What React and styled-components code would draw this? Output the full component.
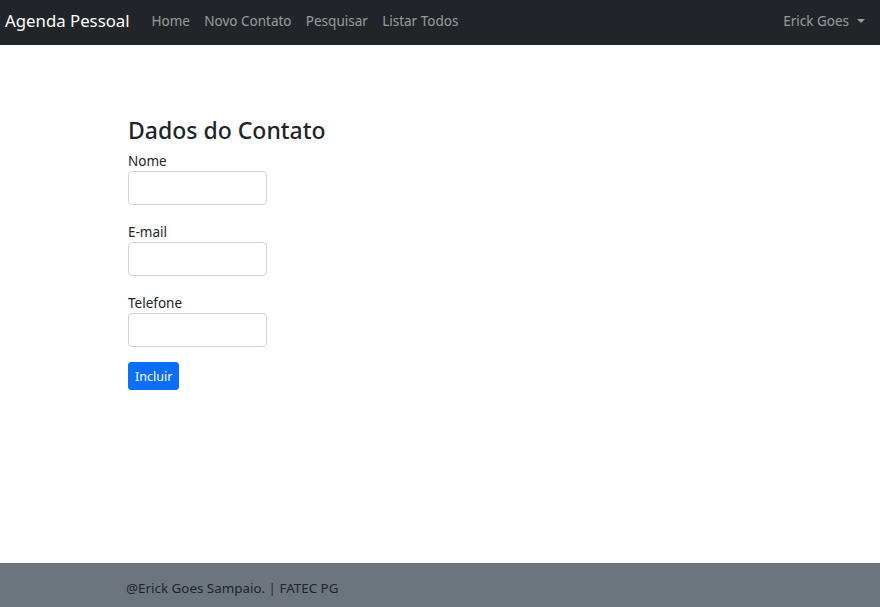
import styled, { createGlobalStyle } from "styled-components";

const Global = createGlobalStyle`
  body {
    margin: 0;
    font-family: "Noto Sans", "Liberation Sans", sans-serif;
    color: #212529;
    background: #fff;
  }
  * { box-sizing: border-box; }
`;

const Page = styled.div`
  display: flex;
  flex-direction: column;
  min-height: 100vh;
`;

const Navbar = styled.nav`
  height: 45px;
  background: #212529;
  display: flex;
  align-items: center;
  padding: 0 15px 4px 5px;
`;

const Brand = styled.a`
  color: #fff;
  font-size: 16.8px;
  margin-right: 22px;
  text-decoration: none;
`;

const NavLinks = styled.div`
  display: flex;
  gap: 14.3px;
  flex: 1;
`;

const NavLink = styled.a`
  color: rgba(255, 255, 255, 0.55);
  font-size: 13.5px;
  text-decoration: none;
`;

const UserMenu = styled.a`
  color: rgba(255, 255, 255, 0.55);
  font-size: 13.5px;
  text-decoration: none;
  display: flex;
  align-items: center;
  gap: 8px;
  &::after {
    content: "";
    border-top: 4.5px solid rgba(255, 255, 255, 0.55);
    border-left: 4.5px solid transparent;
    border-right: 4.5px solid transparent;
  }
`;

const Main = styled.main`
  flex: 1;
  padding: 72px 0 0 128px;
`;

const Title = styled.h3`
  margin: 0 0 6px;
  font-size: 23px;
  font-weight: 500;
  line-height: 1.2;
`;

const Field = styled.div`
  display: flex;
  flex-direction: column;
  align-items: flex-start;
  margin-bottom: 16.5px;
`;

const Label = styled.label`
  font-size: 13.5px;
  line-height: 20px;
`;

const Input = styled.input`
  width: 139px;
  height: 34.5px;
  border: 1px solid #ced4da;
  border-radius: 4px;
  padding: 4px 10px;
  font-size: 14px;
  font-family: inherit;
`;

const Button = styled.button`
  background: #0d6efd;
  color: #fff;
  border: 1px solid #0d6efd;
  border-radius: 3px;
  height: 28px;
  padding: 0 6px;
  font-size: 12.5px;
  font-family: inherit;
  margin-top: -3px;
`;

const Footer = styled.footer`
  height: 44px;
  background: #6c757d;
  display: flex;
  align-items: center;
  padding: 5px 0 0 126px;
  font-size: 13.4px;
  color: #212529;
`;

const Sep = styled.span`
  color: #58151c;
`;

export default function App() {
  return (
    <Page>
      <Global />
      <Navbar>
        <Brand href="#">Agenda Pessoal</Brand>
        <NavLinks>
          <NavLink href="#">Home</NavLink>
          <NavLink href="#">Novo Contato</NavLink>
          <NavLink href="#">Pesquisar</NavLink>
          <NavLink href="#">Listar Todos</NavLink>
        </NavLinks>
        <UserMenu href="#">Erick Goes</UserMenu>
      </Navbar>
      <Main>
        <Title>Dados do Contato</Title>
        <Field>
          <Label>Nome</Label>
          <Input />
        </Field>
        <Field>
          <Label>E-mail</Label>
          <Input />
        </Field>
        <Field>
          <Label>Telefone</Label>
          <Input />
        </Field>
        <Button>Incluir</Button>
      </Main>
      <Footer>
        @Erick Goes Sampaio.&nbsp;<Sep>|</Sep>&nbsp;FATEC PG
      </Footer>
    </Page>
  );
}
